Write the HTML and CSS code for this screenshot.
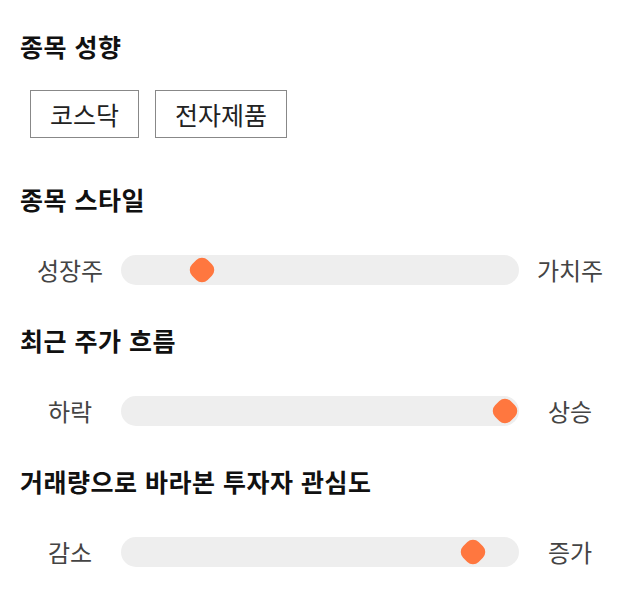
FILE: index.html
```html
<!DOCTYPE html>
<html lang="ko">
<head>
<meta charset="utf-8">
<link rel="stylesheet" href="styles.css">
</head>
<body>
<main class="page">
  <section class="section">
    <h2 class="title">종목 성향</h2>
    <div class="tags">
      <span class="tag">코스닥</span>
      <span class="tag">전자제품</span>
    </div>
  </section>
  <section class="section">
    <h2 class="title">종목 스타일</h2>
    <div class="slider-row">
      <span class="label">성장주</span>
      <div class="track"><div class="rail"><span class="thumb" style="left:18.1%"></span></div></div>
      <span class="label">가치주</span>
    </div>
  </section>
  <section class="section">
    <h2 class="title">최근 주가 흐름</h2>
    <div class="slider-row">
      <span class="label">하락</span>
      <div class="track"><div class="rail"><span class="thumb" style="left:100%"></span></div></div>
      <span class="label">상승</span>
    </div>
  </section>
  <section class="section">
    <h2 class="title">거래량으로 바라본 투자자 관심도</h2>
    <div class="slider-row">
      <span class="label">감소</span>
      <div class="track"><div class="rail"><span class="thumb" style="left:91.4%"></span></div></div>
      <span class="label">증가</span>
    </div>
  </section>
</main>
</body>
</html>
```
FILE: styles.css
```css
* { box-sizing: border-box; }
html, body { margin: 0; padding: 0; background: #fff; }
body {
  font-family: "Noto Sans CJK KR", "Noto Sans", sans-serif;
  color: #111;
}
.page {
  padding: 30px 20px 20px;
  display: flex;
  flex-direction: column;
  gap: 39px;
}
.section { display: flex; flex-direction: column; }
.title {
  margin: 0;
  font-size: 25px;
  line-height: 32px;
  font-weight: 700;
  letter-spacing: 0.5px;
  color: #111;
}
.tags {
  display: flex;
  gap: 16px;
  margin: 28px 0 6px;
  padding-left: 10px;
}
.tag {
  height: 48px;
  padding: 0 19px;
  border: 1px solid #888;
  font-size: 25px;
  line-height: 46px;
  color: #222;
}
.slider-row {
  display: flex;
  align-items: center;
  margin-top: 40px;
}
.label {
  width: 100px;
  flex: none;
  text-align: center;
  font-size: 24px;
  line-height: 30px;
  color: #444;
}
.track {
  flex: 1;
  height: 30px;
  background: #eeeeee;
  border-radius: 15px;
  padding: 0 14px;
  margin: 0 1px;
}
.rail { position: relative; height: 100%; }
.thumb {
  position: absolute;
  top: 50%;
  width: 22px;
  height: 22px;
  background: #ff773f;
  border-radius: 8px;
  transform: translate(-50%, -50%) rotate(45deg);
}
```
